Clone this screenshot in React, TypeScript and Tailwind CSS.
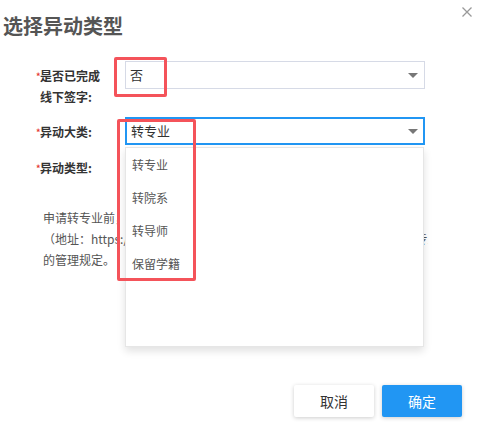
import React from 'react'

const FONT = { fontFamily: '"Microsoft YaHei", "Noto Sans CJK SC", "Noto Sans", sans-serif' }

function Caret() {
  return (
    <svg width="10" height="5" viewBox="0 0 10 5" className="shrink-0">
      <path d="M0 0 L10 0 L5 5 Z" fill="#777" />
    </svg>
  )
}

function Label({ lines }: { lines: string[] }) {
  return (
    <div className="w-[89px] shrink-0 text-[12px] font-bold text-[#333]">
      {lines.map((l, i) => (
        <div key={i} className="h-[21px] flex items-center">
          <span className="w-[4px] h-[21px] flex items-end pb-[5px] text-[9px] leading-none text-[#e53935]">
            {i === 0 ? '*' : ''}
          </span>
          <span className="leading-[21px]">{l}</span>
        </div>
      ))}
    </div>
  )
}

export default function App() {
  const options = ['转专业', '转院系', '转导师', '保留学籍']

  return (
    <div className="relative w-[482px] h-[437px] bg-white flex flex-col overflow-hidden" style={FONT}>
      {/* Header */}
      <div className="h-[39px] flex justify-between items-start">
        <h2 className="pt-[14px] pl-[3px] text-[20px] leading-[24px] font-bold text-[#555]">选择异动类型</h2>
        <button className="mt-[7px] mr-[10px] text-[#999]">
          <svg width="10" height="10" viewBox="0 0 10 10">
            <path d="M0.5 0.5 L9.5 9.5 M9.5 0.5 L0.5 9.5" stroke="#999" strokeWidth="1.3" />
          </svg>
        </button>
      </div>

      {/* Form */}
      <div className="pl-[36px] mt-[22px] flex flex-col">
        <div className="flex items-start h-[46px]">
          <div className="pt-[4px]">
            <Label lines={['是否已完成', '线下签字:']} />
          </div>
          <div className="w-[300px] h-[28px] border border-[#d6dae6] flex items-center justify-between pl-[4px] pr-[6px] text-[13px] text-[#333]">
            <span>否</span>
            <Caret />
          </div>
        </div>

        <div className="flex items-center h-[28px] mt-[10px]">
          <Label lines={['异动大类:']} />
          <div className="relative">
            <div className="w-[300px] h-[28px] border-2 border-[#2196f3] flex items-center justify-between pl-[4px] pr-[5px] text-[13px] text-[#333]">
              <span>转专业</span>
              <Caret />
            </div>
            <ul className="absolute z-10 left-0 top-full mt-[2px] w-[299px] h-[200px] bg-white border border-[#e6e6e6] shadow-[0_4px_8px_rgba(0,0,0,0.12)] text-[12px] text-[#555]">
              {options.map((o) => (
                <li key={o} className="h-[33px] leading-[33px] pl-[6px]">{o}</li>
              ))}
            </ul>
          </div>
        </div>

        <div className="flex items-center h-[28px] mt-[8px]">
          <Label lines={['异动类型:']} />
          <div className="w-[296px] h-[28px] border border-[#d6dae6]" />
        </div>
      </div>

      {/* Notice text */}
      <div className="ml-[43px] mt-[26px] w-[385px] overflow-hidden whitespace-nowrap text-[12px] text-[#555]">
        <div className="h-[21px] leading-[21px]">申请转专业前，请认真阅读学校研究生院发布的转专业相关文件</div>
        <div className="h-[21px] leading-[21px]">（地址：https://yjsy.example.edu.cn/info/1024/2301.htm）：关于转专业</div>
        <div className="h-[21px] leading-[21px]">的管理规定。</div>
      </div>

      {/* Footer */}
      <div className="mt-auto flex justify-end gap-[8px] pr-[20px] pb-[20px]">
        <button className="w-[80px] h-[32px] bg-white text-[14px] text-[#333] rounded-[2px] shadow-[0_1px_4px_rgba(0,0,0,0.2)]">取消</button>
        <button className="w-[80px] h-[32px] bg-[#2196f3] text-[14px] text-white rounded-[2px] shadow-[0_1px_4px_rgba(0,0,0,0.2)]">确定</button>
      </div>

      {/* Annotation boxes */}
      <div className="absolute left-[114px] top-[57px] w-[53px] h-[40px] border-[3px] border-[#f4535a] rounded-[2px] z-20" />
      <div className="absolute left-[117px] top-[119px] w-[79px] h-[162px] border-[3px] border-[#f4535a] rounded-[2px] z-20" />
    </div>
  )
}
